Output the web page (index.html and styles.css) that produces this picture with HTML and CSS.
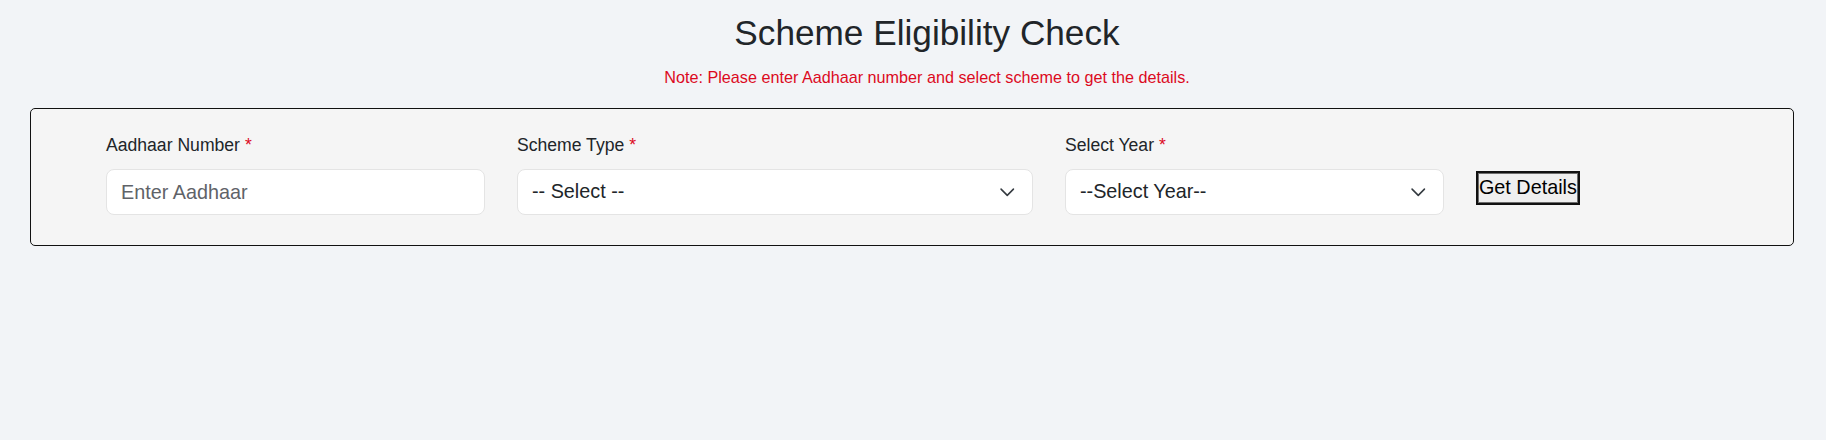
FILE: index.html
```html
<!DOCTYPE html>
<html lang="en">
<head>
<meta charset="utf-8">
<title>Scheme Eligibility Check</title>
<link rel="stylesheet" href="styles.css">
</head>
<body>
<div class="page">
  <header class="header">
    <h2 class="title">Scheme Eligibility Check</h2>
    <p class="note">Note: Please enter Aadhaar number and select scheme to get the details.</p>
  </header>
  <section class="card">
    <div class="row">
      <div class="col col-3">
        <label class="label">Aadhaar Number <span class="req">*</span></label>
        <input class="field" type="text" placeholder="Enter Aadhaar">
      </div>
      <div class="col col-4">
        <label class="label">Scheme Type <span class="req">*</span></label>
        <div class="select-wrap">
          <select class="field select"><option>-- Select --</option></select>
          <svg class="chev" viewBox="0 0 16 16" width="16.5" height="16.5"><path d="m2 5 6 6 6-6" fill="none" stroke="#343a40" stroke-width="1.5" stroke-linecap="round" stroke-linejoin="round"/></svg>
        </div>
      </div>
      <div class="col col-3">
        <label class="label">Select Year <span class="req">*</span></label>
        <div class="select-wrap">
          <select class="field select"><option>--Select Year--</option></select>
          <svg class="chev" viewBox="0 0 16 16" width="16.5" height="16.5"><path d="m2 5 6 6 6-6" fill="none" stroke="#343a40" stroke-width="1.5" stroke-linecap="round" stroke-linejoin="round"/></svg>
        </div>
      </div>
      <div class="col col-2">
        <button class="btn" type="button">Get Details</button>
      </div>
    </div>
  </section>
</div>
</body>
</html>
```
FILE: styles.css
```css
* { box-sizing: border-box; }
html, body {
  margin: 0;
  padding: 0;
  background: #f2f4f7;
  font-family: "Liberation Sans", Arial, sans-serif;
  color: #212529;
}
.page {
  padding: 11.7px 32px 0 30px;
}
.header {
  text-align: center;
  padding-left: 30px;
}
.title {
  margin: 0;
  font-size: 35.2px;
  font-weight: 400;
  line-height: 1.2;
  color: #212529;
}
.note {
  margin: 10.6px 0 0;
  font-size: 16.2px;
  line-height: 1.5;
  color: #dc0a1e;
}
.card {
  margin-top: 19.2px;
  background: #f5f5f5;
  border: 1px solid #111;
  border-radius: 5px;
  padding: 23.4px 59px 30.3px;
}
.row {
  display: flex;
}
.col {
  padding: 0 16px;
  display: flex;
  flex-direction: column;
}
.col-3 { width: 25%; }
.col-4 { width: 33.3333%; }
.col-2 { width: 16.6667%; align-items: flex-start; }
.label {
  font-size: 17.6px;
  line-height: 1.5;
  margin-bottom: 10.5px;
  color: #212529;
}
.req { color: #dc0a1e; }
.field {
  display: block;
  width: 100%;
  font-family: "Liberation Sans", Arial, sans-serif;
  font-size: 19.8px;
  line-height: 29.7px;
  height: 45.7px;
  padding: 7px 14px;
  border: 1px solid #e4e4e4;
  border-radius: 8px;
  background: #fff;
  color: #212529;
  outline: none;
}
.field::placeholder { color: #5f6368; }
.select {
  appearance: none;
  -webkit-appearance: none;
  padding-right: 48px;
}
.select-wrap {
  position: relative;
}
.chev {
  position: absolute;
  right: 17px;
  top: 14.5px;
  pointer-events: none;
}
.btn {
  margin-top: 39px;
  font-family: "Liberation Sans", Arial, sans-serif;
  font-size: 19.8px;
  line-height: 1.5;
  padding: 0 1px;
  background: #efefef;
  color: #000;
  border: 2px solid #111;
  box-shadow: inset 0 0 0 1px #6d6d6d;
  border-radius: 0;
}
```
